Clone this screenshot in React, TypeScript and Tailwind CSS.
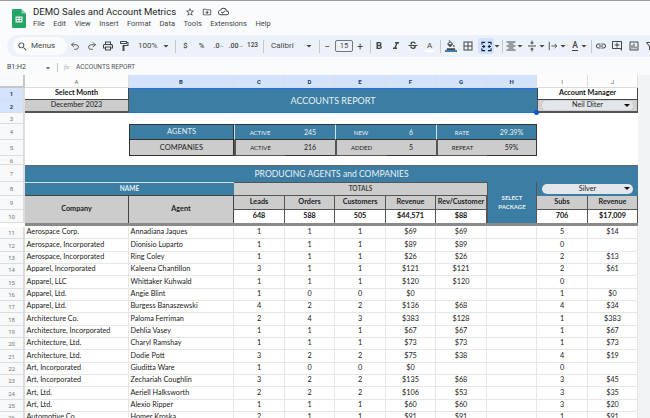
import type { ReactNode } from 'react';
import { Redo2, Undo2 } from 'lucide-react';
import {
   MdBorderAll,
   MdFormatAlignCenter,
   MdFormatBold,
   MdFormatColorFill,
   MdFormatItalic,
   MdLink,
   MdOutlineAddComment,
   MdOutlineCloudDone,
   MdOutlineDriveFileMove,
   MdOutlineFormatPaint,
   MdOutlineInsertChart,
   MdOutlineLocalPrintshop,
   MdSearch,
   MdStarBorder,
   MdStrikethroughS,
   MdVerticalAlignCenter,
   MdArrowDropDown,
   MdOutlineFilterAlt,
} from 'react-icons/md';

const MENU = ['File', 'Edit', 'View', 'Insert', 'Format', 'Data', 'Tools', 'Extensions', 'Help'];

const ROWS: [number, string, string, string, string, string, string, string, string, string][] = [
   [11, 'Aerospace Corp.', 'Annadiana Jaques', '1', '1', '1', '$69', '$69', '5', '$14'],
   [12, 'Aerospace, Incorporated', 'Dionisio Luparto', '1', '1', '1', '$89', '$89', '0', ''],
   [13, 'Aerospace, Incorporated', 'Ring Coley', '1', '1', '1', '$26', '$26', '2', '$13'],
   [14, 'Apparel, Incorporated', 'Kaleena Chantillon', '3', '1', '1', '$121', '$121', '2', '$61'],
   [15, 'Apparel, LLC', 'Whittaker Kuhwald', '1', '1', '1', '$120', '$120', '0', ''],
   [16, 'Apparel, Ltd.', 'Angie Blint', '1', '0', '0', '$0', '', '1', '$0'],
   [17, 'Apparel, Ltd.', 'Burgess Banaszewski', '4', '2', '2', '$136', '$68', '4', '$34'],
   [18, 'Architecture Co.', 'Paloma Ferriman', '2', '4', '3', '$383', '$128', '1', '$383'],
   [19, 'Architecture, Incorporated', 'Dehlia Vasey', '1', '1', '1', '$67', '$67', '1', '$67'],
   [20, 'Architecture, Ltd.', 'Charyl Ramshay', '1', '1', '1', '$73', '$73', '1', '$73'],
   [21, 'Architecture, Ltd.', 'Dodie Pott', '3', '2', '2', '$75', '$38', '4', '$19'],
   [22, 'Art, Incorporated', 'Giuditta Ware', '1', '0', '0', '$0', '', '0', ''],
   [23, 'Art, Incorporated', 'Zechariah Coughlin', '3', '2', '2', '$135', '$68', '3', '$45'],
   [24, 'Art, Ltd.', 'Aeriell Halksworth', '2', '2', '2', '$106', '$53', '3', '$35'],
   [25, 'Art, Ltd.', 'Alexio Ripper', '1', '1', '1', '$60', '$60', '3', '$20'],
   [26, 'Automotive Co.', 'Homer Kroska', '2', '1', '1', '$91', '$91', '1', '$91'],
];

const COLS = 'grid grid-cols-[25px_104px_105px_51px_50px_51px_50px_51px_50px_51px_50px]';

function Slot({ className, children }: { className: string; children: ReactNode }) {
   return <div className={`flex shrink-0 items-center justify-center ${className}`}>{children}</div>;
}

function Sep({ className = 'mx-[3px]' }: { className?: string }) {
   return <div className={`h-[13px] w-px shrink-0 bg-[#c7c7c7] ${className}`} />;
}

function Caret() {
   return <MdArrowDropDown className="h-[12px] w-[12px] shrink-0 text-[#444746]" />;
}

function Toolbar() {
   const icon = 'h-[12px] w-[12px] shrink-0 text-[#444746]';
   return (
      <div className="ml-[7px] flex h-[22px] w-[660px] items-center overflow-hidden rounded-full bg-[#edf2fa] pl-[6px] text-[#444746]">
         <div className="flex h-[18px] w-[54px] shrink-0 items-center gap-[3px] rounded-full bg-[#f9fbfd] pl-[4px] text-[8px]">
            <MdSearch className="h-[11px] w-[11px]" />
            <span>Menus</span>
         </div>
         <Slot className="w-[16px]"><Undo2 className="h-[10px] w-[10px] shrink-0" strokeWidth={2} /></Slot>
         <Slot className="w-[17px]"><Redo2 className="h-[10px] w-[10px] shrink-0" strokeWidth={2} /></Slot>
         <Slot className="w-[16px]"><MdOutlineLocalPrintshop className={icon} /></Slot>
         <Slot className="w-[16px]"><MdOutlineFormatPaint className={icon} /></Slot>
         <span className="ml-[6px] w-[22px] shrink-0 text-[8px]">100%</span>
         <Slot className="w-[12px]"><Caret /></Slot>
         <Sep />
         <Slot className="w-[13px] text-[7.5px] font-medium">$</Slot>
         <Slot className="w-[19px] text-[7.5px] font-medium">%</Slot>
         <Slot className="w-[16px] text-[7px] font-medium">.0<span className="text-[5px]">←</span></Slot>
         <Slot className="w-[18px] text-[7px] font-medium">.00<span className="text-[5px]">→</span></Slot>
         <Slot className="w-[15px] text-[6.5px] font-medium">123</Slot>
         <Sep />
         <span className="ml-[4px] w-[31px] shrink-0 text-[8px]">Calibri</span>
         <Slot className="w-[14px]"><Caret /></Slot>
         <Sep />
         <Slot className="w-[8px] text-[10px]">−</Slot>
         <div className="ml-[4px] flex h-[12px] w-[18px] shrink-0 items-center justify-center rounded-[2px] border border-[#747775] text-[7.5px]">15</div>
         <Slot className="w-[14px] text-[10px]">+</Slot>
         <Sep className="ml-[3px]" />
         <Slot className="w-[16px]"><MdFormatBold className={icon} /></Slot>
         <Slot className="w-[17px]"><MdFormatItalic className={icon} /></Slot>
         <Slot className="w-[17px]"><MdStrikethroughS className={icon} /></Slot>
         <Slot className="w-[17px] text-[8px] leading-[9px]">
            <span className="border-b-2 border-white px-[2px]">A</span>
         </Slot>
         <Sep className="mx-[2px]" />
         <Slot className="w-[16px]">
            <div className="flex flex-col items-center">
               <MdFormatColorFill className="h-[10px] w-[10px]" />
               <div className="h-[2px] w-[12px] bg-[#3d7ea6]" />
            </div>
         </Slot>
         <Slot className="w-[18px]"><MdBorderAll className={icon} /></Slot>
         <Slot className="ml-[1px] h-[16px] w-[16px] rounded-[3px] bg-[#d3e3fd]">
            <svg viewBox="0 0 12 12" className="h-[11px] w-[11px]" fill="none" stroke="#041e49" strokeWidth="1.1">
               <path d="M1 4V1.5h3.5M7.5 1.5H11V4M1 8v2.5h3.5M7.5 10.5H11V8M1 6h3M2.6 4.6 4 6 2.6 7.4M11 6H8M9.4 4.6 8 6l1.4 1.4" />
            </svg>
         </Slot>
         <Slot className="w-[6px]"><Caret /></Slot>
         <Sep className="ml-[2px] mr-[2px]" />
         <Slot className="w-[12px]"><MdFormatAlignCenter className={icon} /></Slot>
         <Slot className="w-[6px]"><Caret /></Slot>
         <Slot className="ml-[3px] w-[12px]"><MdVerticalAlignCenter className={icon} /></Slot>
         <Slot className="w-[7px]"><Caret /></Slot>
         <Slot className="ml-[2px] w-[12px]">
            <svg viewBox="0 0 12 12" className="h-[10px] w-[10px]" fill="none" stroke="#444746" strokeWidth="1.1">
               <path d="M1.5 1v10M4 6h6.5M8 3.5 10.5 6 8 8.5" />
            </svg>
         </Slot>
         <Slot className="w-[8px]"><Caret /></Slot>
         <Slot className="ml-[2px] w-[12px] text-[8.5px] font-medium">
            <span className="border-b border-[#444746] leading-[9px]">A</span>
         </Slot>
         <Slot className="w-[6px]"><Caret /></Slot>
         <Sep className="ml-[4px] mr-[1px]" />
         <Slot className="w-[16px]"><MdLink className={icon} /></Slot>
         <Slot className="w-[16px]"><MdOutlineAddComment className={icon} /></Slot>
         <Slot className="ml-[1px] w-[16px]"><MdOutlineInsertChart className={icon} /></Slot>
         <Slot className="w-[16px]"><MdOutlineFilterAlt className={icon} /></Slot>
      </div>
   );
}

function Pick({ label }: { label: string }) {
   return (
      <div className="relative flex h-[9.5px] w-[91px] items-center justify-center rounded-full bg-[#e3e6ea] text-[7.25px] text-[#222]">
         {label}
         <span className="absolute right-[3px] top-[3px] h-0 w-0 border-x-[3px] border-t-[3px] border-x-transparent border-t-[#111]" />
      </div>
   );
}

function Head({ n, sel }: { n: number; sel?: boolean }) {
   return (
      <div
         className={`flex items-center justify-center border-b border-r-2 border-[#dcdcdc] font-['Roboto',sans-serif] text-[6px] ${
            sel ? 'bg-[#d3e3fd] font-bold text-[#1a3a6b]' : 'bg-[#f8f9fa] text-[#777]'
         }`}
      >
         {n}
      </div>
   );
}

export default function App() {
   const teal = 'bg-[#3c7da3] text-[#e8f1f6]';
   const gray = 'bg-[#cccccc] text-[#222]';
   const center = 'flex items-center justify-center';
   const letters = ['A', 'B', 'C', 'D', 'E', 'F', 'G', 'H', 'I', 'J'];

   return (
      <div className="h-[418px] w-[650px] overflow-hidden border-t-[1.5px] border-[#9a9a9a] bg-[#f9fbfd] font-['Roboto',sans-serif]">
         {/* Title and menus */}
         <div className="flex h-[34px] items-start pl-[12px] pt-[8px]">
            <svg viewBox="0 0 14 19" className="h-[19px] w-[14px] shrink-0">
               <path d="M1.2 0H9.500L14 4.500V17.800A1.200 1.200 0 0 1 12.800 19H1.200A1.200 1.200 0 0 1 0 17.800V1.200A1.200 1.200 0 0 1 1.200 0z" fill="#23a566" />
               <path d="M9.500 0L14 4.500H9.500z" fill="#8ed1b1" />
               <path d="M3.500 7.500h7v6h-7z M4.700 8.700v1.300h1.700V8.700z M7.600 8.700v1.300h1.700V8.700z M4.700 11v1.300h1.700V11z M7.600 11v1.300h1.700V11z" fill="#f1f1f1" fillRule="evenodd" />
            </svg>
            <div className="ml-[7px] mt-[-4.500px]">
               <div className="flex items-center">
                  <span className="w-[146px] whitespace-nowrap text-[9.600px] leading-[14px] text-[#1f1f1f]">DEMO Sales and Account Metrics</span>
                  <MdStarBorder className="ml-[6px] h-[10px] w-[10px] text-[#444746]" />
                  <MdOutlineDriveFileMove className="ml-[7px] h-[10px] w-[10px] text-[#444746]" />
                  <MdOutlineCloudDone className="ml-[6px] h-[11px] w-[11px] text-[#444746]" />
               </div>
               <div className="flex gap-[8.500px] text-[7.500px] leading-[10px] text-[#444746]">
                  {MENU.map((m) => (
                     <span key={m}>{m}</span>
                  ))}
               </div>
            </div>
         </div>

         <Toolbar />

         {/* Formula bar */}
         <div className="mt-[3px] flex h-[15px] items-center text-[7px] text-[#444746]">
            <span className="ml-[7px] w-[36px]">B1:H2</span>
            <MdArrowDropDown className="h-[10px] w-[10px]" />
            <div className="ml-[4px] h-[9px] w-px bg-[#c7c7c7]" />
            <span className="ml-[6px] w-[8px] font-['Liberation_Serif',serif] italic text-[#9aa0a6]">fx</span>
            <span className="ml-[4px] text-[6.500px] text-[#555]">ACCOUNTS REPORT</span>
         </div>

         {/* Sheet */}
         <div className="relative w-[650px] bg-white font-['Lato',sans-serif] text-[7.250px]">
            <div className={`${COLS} grid-rows-[13px_12px_13px_11px_16px_16px_9px_17px_14px_14px_13px]`}>
               {/* Column header */}
               <div className="border-b-2 border-r-2 border-[#c4c7c5] bg-[#f8f9fa]" />
               {letters.map((l) => {
                  const sel = 'BCDEFGH'.includes(l);
                  return (
                     <div
                        key={l}
                        className={`${center} border-b border-r border-[#dcdcdc] font-['Roboto',sans-serif] text-[6px] ${
                           sel ? 'bg-[#d3e3fd] font-bold text-[#1a3a6b]' : 'bg-[#fdfdfd] text-[#666]'
                        }`}
                     >
                        {l}
                     </div>
                  );
               })}

               {/* Rows 1 and 2 */}
               <Head n={1} sel />
               <div className={`${center} border-b border-r border-[#444] font-bold text-[#111]`}>Select Month</div>
               <div className={`${center} relative col-span-7 row-span-2 border-y border-[#1a73e8] ${teal} text-[9px]`}>
                  ACCOUNTS REPORT
                  <span className="absolute bottom-[-3px] right-[-2px] h-[5px] w-[5px] rounded-full bg-[#0b57d0]" />
               </div>
               <div className={`${center} col-span-2 border-x border-b border-[#444] font-bold text-[#111]`}>Account Manager</div>

               <Head n={2} sel />
               <div className={`${center} border-b-2 border-r border-[#555] ${gray}`}>December 2023</div>
               <div className={`${center} col-span-2 border-x border-b-2 border-[#555] bg-[#d0d0d0]`}>
                  <Pick label="Neil Diter" />
               </div>

               {/* Row 3 */}
               <Head n={3} />
               <div className="col-span-10" />

               {/* Row 4 */}
               <Head n={4} />
               <div />
               <div className={`${center} border border-[#333] ${teal} text-[7.500px]`}>AGENTS</div>
               <div className={`${center} border-y border-l border-[#333] border-l-[#cfe0ea] ${teal} text-[6px]`}>ACTIVE</div>
               <div className={`${center} border-y border-[#333] ${teal} text-[7px]`}>245</div>
               <div className={`${center} border-y border-l border-[#333] border-l-[#cfe0ea] ${teal} text-[6px]`}>NEW</div>
               <div className={`${center} border-y border-[#333] ${teal} text-[7px]`}>6</div>
               <div className={`${center} border-y border-l border-[#333] border-l-[#cfe0ea] ${teal} text-[6px]`}>RATE</div>
               <div className={`${center} border-y border-r border-[#333] ${teal} text-[7px]`}>29.39%</div>
               <div className="col-span-2" />

               {/* Row 5 */}
               <Head n={5} />
               <div />
               <div className={`${center} border-x border-b border-[#333] ${gray} text-[7.500px]`}>COMPANIES</div>
               <div className={`${center} border-b border-l-2 border-[#555] ${gray} text-[6px]`}>ACTIVE</div>
               <div className={`${center} border-b border-[#333] ${gray} text-[7px]`}>216</div>
               <div className={`${center} border-b border-l-2 border-[#555] ${gray} text-[6px]`}>ADDED</div>
               <div className={`${center} border-b border-[#333] ${gray} text-[7px]`}>5</div>
               <div className={`${center} border-b border-l-2 border-[#555] ${gray} text-[6px]`}>REPEAT</div>
               <div className={`${center} border-b border-r border-[#333] ${gray} text-[7px]`}>59%</div>
               <div className="col-span-2" />

               {/* Row 6 */}
               <Head n={6} />
               <div className="col-span-10" />

               {/* Row 7 */}
               <Head n={7} />
               <div className={`${center} col-span-10 border-t border-[#666] ${teal} text-[8.600px]`}>PRODUCING AGENTS and COMPANIES</div>

               {/* Row 8 */}
               <Head n={8} />
               <div className={`${center} col-span-2 border-y border-[#cfe0ea] border-b-[#444] ${teal} text-[6.500px] font-bold`}>NAME</div>
               <div className={`${center} col-span-5 border-y border-[#555] bg-[#cccccc] text-[#444] text-[6.500px] font-bold`}>TOTALS</div>
               <div className={`${center} row-span-3 border-x border-[#555] ${teal} text-center text-[6px] font-bold leading-[8.500px]`}>
                  SELECT
                  <br />
                  PACKAGE
               </div>
               <div className={`${center} col-span-2 ${teal}`}>
                  <Pick label="Silver" />
               </div>

               {/* Row 9 */}
               <Head n={9} />
               <div className={`${center} row-span-2 border-r border-[#444] ${gray} font-bold`}>Company</div>
               <div className={`${center} row-span-2 border-r border-[#444] ${gray} font-bold`}>Agent</div>
               {['Leads', 'Orders', 'Customers', 'Revenue', 'Rev/Customer'].map((h) => (
                  <div key={h} className={`${center} whitespace-nowrap border-b border-r border-[#555] ${gray} font-bold`}>
                     {h}
                  </div>
               ))}
               {['Subs', 'Revenue'].map((h) => (
                  <div key={h} className={`${center} border-b border-r border-[#555] ${gray} font-bold`}>
                     {h}
                  </div>
               ))}

               {/* Row 10 */}
               <Head n={10} />
               {['648', '588', '505', '$44,571', '$88'].map((v) => (
                  <div key={v} className={`${center} border-r border-[#555] bg-white font-bold text-[#111]`}>
                     {v}
                  </div>
               ))}
               {['706', '$17,009'].map((v) => (
                  <div key={v} className={`${center} border-r border-[#555] bg-white font-bold text-[#111]`}>
                     {v}
                  </div>
               ))}
            </div>
            <div className="ml-[25px] h-[3px] w-[613px] bg-[#8a8a8a]" />

            {/* Data rows */}
            <div className="pt-[1px]">
               {ROWS.map((r) => (
                  <div key={r[0]} className={`${COLS} h-[12.350px] text-[#222]`}>
                     <Head n={r[0]} />
                     <div className="flex items-center whitespace-nowrap border-b border-r border-[#e6e6e6] pl-[1.500px]">{r[1]}</div>
                     <div className="flex items-center whitespace-nowrap border-b border-r border-[#e6e6e6] pl-[1.500px]">{r[2]}</div>
                     {[r[3], r[4], r[5], r[6], r[7], '', r[8], r[9]].map((v, i) => (
                        <div key={i} className={`${center} border-b border-r border-[#e6e6e6]`}>
                           {v}
                        </div>
                     ))}
                  </div>
               ))}
            </div>

            {/* Off-sheet area to the right */}
            <div className="absolute bottom-0 right-0 top-0 w-[12px] bg-[#f1f3f4]" />
         </div>
      </div>
   );
}
